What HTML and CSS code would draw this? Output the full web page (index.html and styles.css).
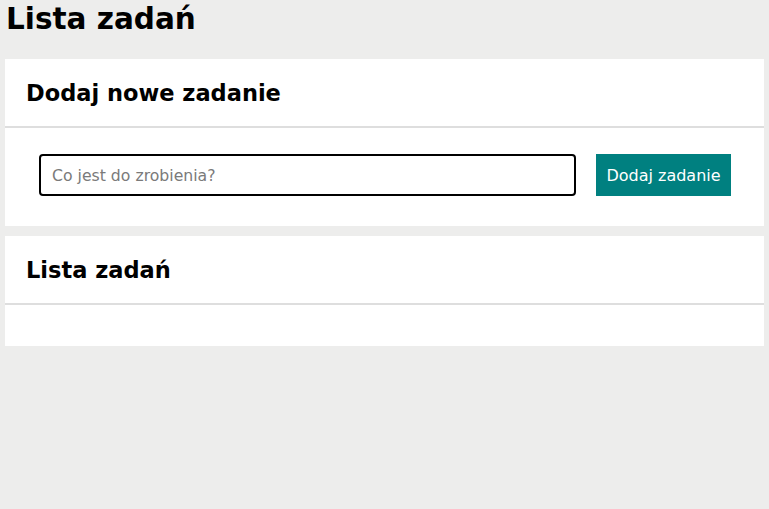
FILE: index.html
```html
<!DOCTYPE html>
<html lang="pl">
<head>
<meta charset="utf-8">
<title>Lista zadań</title>
<link rel="stylesheet" href="styles.css">
</head>
<body>
<h1 class="page-title">Lista zadań</h1>
<section class="card">
  <h2 class="card-header">Dodaj nowe zadanie</h2>
  <form class="card-body add-form">
    <input class="task-input" type="text" placeholder="Co jest do zrobienia?">
    <button class="add-btn" type="button">Dodaj zadanie</button>
  </form>
</section>
<section class="card">
  <h2 class="card-header">Lista zadań</h2>
  <div class="card-body list-body"></div>
</section>
</body>
</html>
```
FILE: styles.css
```css
* { box-sizing: border-box; }
html, body { margin: 0; }
body {
  background: #ededec;
  padding: 0 5px;
  font-family: "DejaVu Sans", "Open Sans", sans-serif;
  color: #000;
}
.page-title {
  margin: 0;
  padding: 0 0 0 1px;
  font-size: 29.5px;
  line-height: 38px;
  font-weight: 700;
  height: 59px;
}
.card {
  background: #fff;
  margin-bottom: 10px;
}
.card-header {
  margin: 0;
  font-size: 22.5px;
  font-weight: 700;
  line-height: 28px;
  padding: 20px 21px 19px;
  border-bottom: 2px solid #dedede;
}
.card-body { margin: 0; }
.add-form {
  display: flex;
  gap: 20px;
  padding: 26px 33px 30px 34px;
}
.task-input {
  flex: 1;
  height: 42px;
  border: 2px solid #000;
  border-radius: 4px;
  padding: 0 11px;
  font-family: inherit;
  font-size: 15.7px;
  color: #000;
  outline: none;
}
.task-input::placeholder { color: #7a7a7a; }
.add-btn {
  width: 135px;
  height: 42px;
  border: 0;
  background: #008080;
  color: #fff;
  font-family: inherit;
  font-size: 16px;
  padding: 0 6px;
}
.list-body { height: 41px; }
```
